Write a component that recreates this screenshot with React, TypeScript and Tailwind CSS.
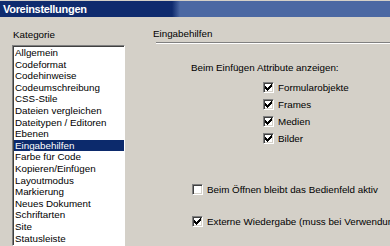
import React from "react";

const items = [
  "Allgemein",
  "Codeformat",
  "Codehinweise",
  "Codeumschreibung",
  "CSS-Stile",
  "Dateien vergleichen",
  "Dateitypen / Editoren",
  "Ebenen",
  "Eingabehilfen",
  "Farbe für Code",
  "Kopieren/Einfügen",
  "Layoutmodus",
  "Markierung",
  "Neues Dokument",
  "Schriftarten",
  "Site",
  "Statusleiste",
  "Unsichtbare Elemente",
  "Vorschau in Browser",
];

function Check({ checked }: { checked: boolean }) {
  return (
    <div className="w-[11px] h-[11px] shrink-0 bg-white border border-t-[#808080] border-l-[#808080] border-b-white border-r-white shadow-[inset_1px_1px_0_#404040,inset_-1px_-1px_0_#d4d0c8] relative">
      {checked && (
        <svg width="9" height="9" viewBox="0 0 9 9" className="absolute left-0 top-0">
          <path d="M1.5 3.5 L3.5 5.5 L7.5 1.5 M1.5 4.5 L3.5 6.5 L7.5 2.5 M1.5 5.5 L3.5 7.5 L7.5 3.5" stroke="#000" strokeWidth="1" fill="none" shapeRendering="crispEdges" />
        </svg>
      )}
    </div>
  );
}

function Row({ checked, label, className }: { checked: boolean; label: string; className?: string }) {
  return (
    <div className={"flex items-center h-[17px] gap-[4px] whitespace-nowrap " + (className ?? "")}>
      <Check checked={checked} />
      <span>{label}</span>
    </div>
  );
}

export default function App() {
  return (
    <div
      className="w-[390px] h-[246px] bg-[#d4d0c8] flex flex-col overflow-hidden text-black text-[9.8px] leading-[12px]"
      style={{ fontFamily: '"Liberation Sans", Arial, sans-serif' }}
    >
      <div className="h-[16px] mt-[1px] shrink-0 pl-[3px] flex items-center text-white font-bold text-[11px] tracking-[-0.3px] bg-[linear-gradient(to_right,#0f2b6e_172px,#4b68a3_180px)]">
        Voreinstellungen
      </div>
      <div className="flex flex-1 min-h-0">
        <div className="ml-[12px] w-[113px] flex flex-col shrink-0">
          <div className="mt-[12px] pl-[1px]">Kategorie</div>
          <div className="mt-[4px] flex-1 bg-white border border-t-[#808080] border-l-[#808080] border-r-white border-b-white shadow-[inset_1px_1px_0_#404040] pt-[1px] pl-[1px] overflow-hidden">
            {items.map((it) => (
              <div
                key={it}
                className={
                  "h-[11.6px] leading-[11.6px] pl-[1px] whitespace-nowrap " +
                  (it === "Eingabehilfen" ? "bg-[#0c2a6c] text-white" : "")
                }
              >
                {it}
              </div>
            ))}
          </div>
        </div>
        <div className="ml-[28px] flex-1 flex flex-col min-w-0">
          <div className="mt-[11px]">Eingabehilfen</div>
          <div className="mt-[2px] ml-[3px] h-[2px] border-t border-t-[#808080] border-b border-b-white" />
          <div className="mt-[18px] ml-[38px] whitespace-nowrap">Beim Einfügen Attribute anzeigen:</div>
          <div className="mt-[5px] ml-[110px] flex flex-col">
            <Row checked label="Formularobjekte" />
            <Row checked label="Frames" />
            <Row checked label="Medien" />
            <Row checked label="Bilder" />
          </div>
          <div className="mt-[34px] ml-[39px] flex flex-col gap-[15px]">
            <Row checked={false} label="Beim Öffnen bleibt das Bedienfeld aktiv" />
            <Row checked label="Externe Wiedergabe (muss bei Verwendung von Strg geschlossen werden)" />
          </div>
        </div>
      </div>
    </div>
  );
}
